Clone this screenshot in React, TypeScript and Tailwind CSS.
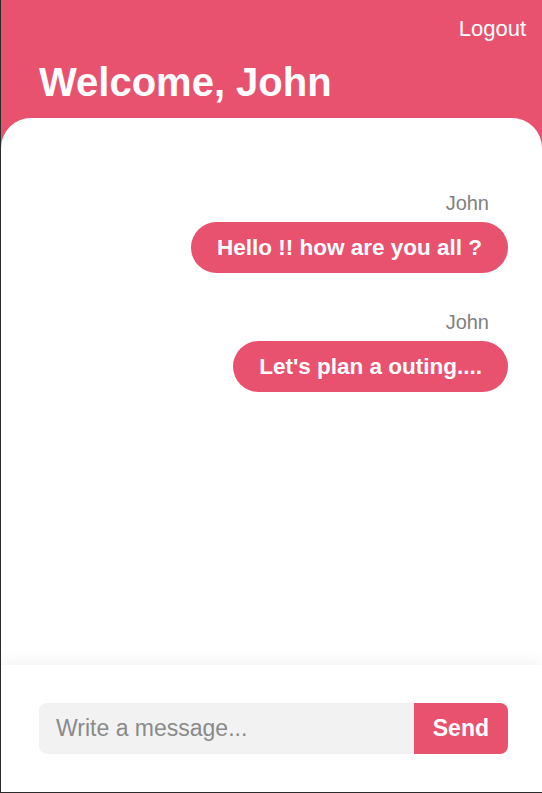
import React from "react";

const messages = [
  { author: "John", text: "Hello !! how are you all ?" },
  { author: "John", text: "Let's plan a outing...." },
];

export default function App() {
  return (
    <div
      className="flex h-[793px] w-full flex-col overflow-hidden border-b border-l border-[#2b2b2b] bg-[#e9526f]"
      style={{ fontFamily: '"Liberation Sans", Arial, sans-serif' }}
    >
      <header className="pl-[38px] pr-[16px] pt-[16px] pb-[13px] text-white">
        <div className="flex justify-end">
          <button className="text-[22px] leading-[25px]">Logout</button>
        </div>
        <h1 className="mt-[18px] text-[40px] font-bold leading-[46px]">Welcome, John</h1>
      </header>

      <main className="flex flex-1 flex-col overflow-hidden rounded-t-[30px] bg-white">
        <div className="flex flex-1 flex-col items-end gap-[38px] pt-[74px] pr-[34px]">
          {messages.map((m, i) => (
            <div key={i} className="flex flex-col items-end">
              <p className="mr-[19px] mb-[7px] text-[20px] leading-[23px] text-[#808080]">{m.author}</p>
              <div className="rounded-full bg-[#e9526f] px-[26px] py-[13px] text-[22.5px] font-bold leading-[25px] text-white">
                {m.text}
              </div>
            </div>
          ))}
        </div>

        <footer className="flex h-[127px] items-center bg-white pl-[38px] pr-[34px] shadow-[0_-6px_12px_rgba(0,0,0,0.04)]">
          <div className="flex h-[51px] flex-1">
            <input
              className="min-w-0 flex-1 rounded-l-[8px] bg-[#f2f2f2] px-[17px] text-[23px] text-[#333] outline-none placeholder:text-[#8a8a8a]"
              placeholder="Write a message..."
            />
            <button className="rounded-r-[8px] bg-[#e9526f] px-[19px] text-[23px] font-bold text-white">Send</button>
          </div>
        </footer>
      </main>
    </div>
  );
}
